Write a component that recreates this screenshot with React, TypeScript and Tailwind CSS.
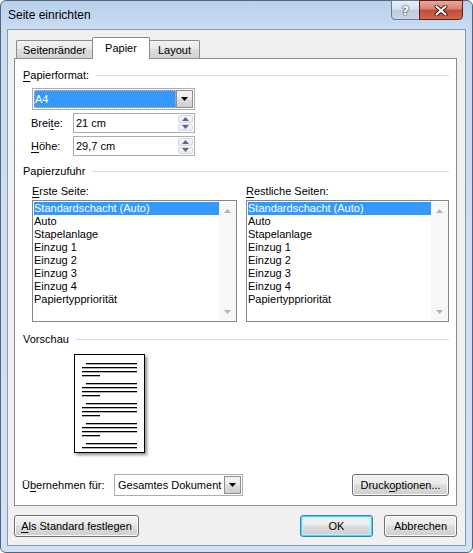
import React from "react";

const BTN =
  "flex h-[22px] items-center justify-center rounded-[3px] border border-[#707070] bg-[linear-gradient(#f2f2f2,#ebebeb_45%,#dddddd_50%,#cfcfcf)] shadow-[inset_0_0_0_1px_#fbfbfb]";

const paperSources = [
  "Standardschacht (Auto)",
  "Auto",
  "Stapelanlage",
  "Einzug 1",
  "Einzug 2",
  "Einzug 3",
  "Einzug 4",
  "Papiertyppriorität",
];

function Mn({ children }: { children: React.ReactNode }) {
  return <span className="underline underline-offset-[2px]">{children}</span>;
}

function SectionHeader({ children, className = "" }: { children: React.ReactNode; className?: string }) {
  return (
    <div className={`flex h-[13px] items-center ${className}`}>
      <span className="leading-[13px]">{children}</span>
      <div className="ml-[7px] h-px flex-1 bg-[#d5dfe5]" />
    </div>
  );
}

function DropButton() {
  return (
    <div className="flex w-[17px] items-center justify-center border border-[#8f8f8f] bg-[linear-gradient(#f2f2f2,#ebebeb_45%,#dddddd_50%,#cfcfcf)]">
      <svg width="7" height="4" viewBox="0 0 7 4">
        <path d="M0 0h7L3.5 4z" fill="#000" />
      </svg>
    </div>
  );
}

function Spinner() {
  return (
    <div className="flex w-[17px] flex-col gap-px p-px">
      {[0, 1].map((i) => (
        <div
          key={i}
          className="flex flex-1 items-center justify-center rounded-[2px] border border-[#d3d7de] bg-[linear-gradient(#f7f8fa,#e6eaf0)]"
        >
          <svg width="7" height="4" viewBox="0 0 7 4">
            <path d={i === 0 ? "M0 4h7L3.5 0z" : "M0 0h7L3.5 4z"} fill="#56698a" />
          </svg>
        </div>
      ))}
    </div>
  );
}

function SpinField({ value }: { value: string }) {
  return (
    <div className="flex h-[20px] w-[122px] border border-[#abadb3] bg-white">
      <span className="flex-1 pl-[2px] leading-[18px]">{value}</span>
      <Spinner />
    </div>
  );
}

function PaperList({ width }: { width: string }) {
  return (
    <div className={`flex h-[122px] border border-[#828790] bg-white py-px pl-px ${width}`}>
      <div className="flex-1">
        {paperSources.map((s, i) => (
          <div
            key={s}
            className={i === 0 ? "h-[13px] bg-[#3399ff] leading-[13px] text-white" : "h-[13px] leading-[13px]"}
          >
            {s}
          </div>
        ))}
      </div>
      <div className="flex w-[17px] flex-col justify-between bg-[#f7f7f7]">
        <div className="flex h-[17px] items-center justify-center">
          <svg width="7" height="4" viewBox="0 0 7 4">
            <path d="M0 4h7L3.5 0z" fill="#b4b4b4" />
          </svg>
        </div>
        <div className="flex h-[17px] items-center justify-center">
          <svg width="7" height="4" viewBox="0 0 7 4">
            <path d="M0 0h7L3.5 4z" fill="#b4b4b4" />
          </svg>
        </div>
      </div>
    </div>
  );
}

function PreviewPage() {
  const groups = [0, 1, 2, 3];
  return (
    <div className="ml-[51px] mt-[8px] h-[99px] w-[71px] border border-black bg-white shadow-[2px_2px_3px_rgba(0,0,0,0.45)]">
      <svg width="69" height="97" viewBox="0 0 69 97">
        {groups.map((g) => (
          <g key={g} fill="#000">
            <rect x="11" y={8 + g * 20} width="51" height="1.3" />
            <rect x="7" y={12 + g * 20} width="55" height="1.3" />
            <rect x="7" y={16 + g * 20} width="55" height="1.3" />
            <rect x="7" y={20 + g * 20} width="18" height="1.3" />
          </g>
        ))}
        <rect x="11" y="88" width="51" height="1.3" fill="#000" />
        <rect x="7" y="92" width="55" height="1.3" fill="#000" />
      </svg>
    </div>
  );
}

export default function App() {
  return (
    <div className="h-[553px] w-[473px] font-['Liberation_Sans',Arial,sans-serif] text-[11px] text-black">
      <div className="flex h-full flex-col rounded-[6px] border border-[#56657a] bg-[linear-gradient(180deg,#b9d1ec_0px,#c8dcf2_28px,#d0e2f6_100%)]">
        {/* title bar */}
        <div className="flex h-[28px] items-start">
          <span className="ml-[7px] mt-[7px] text-[12px] leading-[14px]">Seite einrichten</span>
          <div className="-mt-px ml-auto mr-[9px] flex">
            <div className="flex h-[20px] w-[29px] items-center justify-center rounded-bl-[4px] border border-[#6b7b8f] bg-[linear-gradient(#e9f0f8,#d2deec_50%,#bccbdc_50%,#c9d8e8)]">
              <span className="font-['DejaVu_Sans',sans-serif] text-[13px] font-bold leading-none text-white [text-shadow:0_0_1px_#1e2c3e,0_0_2px_#1e2c3e]">
                ?
              </span>
            </div>
            <div className="-ml-px flex h-[20px] w-[44px] items-center justify-center rounded-br-[4px] border border-[#5e2119] bg-[linear-gradient(#e9a99b,#d7826f_45%,#c44a34_50%,#d0674f)]">
              <svg width="14" height="11" viewBox="0 0 14 11">
                <path d="M2.5 1.5l9 8M11.5 1.5l-9 8" stroke="#3b1510" strokeWidth="4" strokeLinecap="round" />
                <path d="M2.5 1.5l9 8M11.5 1.5l-9 8" stroke="#fff" strokeWidth="2.2" strokeLinecap="round" />
              </svg>
            </div>
          </div>
        </div>

        {/* client area */}
        <div className="mx-[6px] flex h-[517px] flex-col border border-[#8d99a6] bg-[#f0f0f0]">
          {/* tabs */}
          <div className="ml-[8px] mt-[7px] flex h-[21px] items-end">
            <div className="flex h-[18px] w-[76px] items-center justify-center rounded-tl-[2px] border-l border-t border-[#898c95] bg-[linear-gradient(#f2f2f2,#e8e8e8_50%,#dcdcdc_50%,#d3d3d3)] pt-[2px] leading-[13px]">
              Seitenränder
            </div>
            <div className="relative z-10 -mb-px flex h-[22px] w-[58px] items-center justify-center rounded-t-[2px] border-x border-t border-[#898c95] bg-white leading-[13px]">
              Papier
            </div>
            <div className="flex h-[18px] w-[50px] items-center justify-center rounded-tr-[2px] border-r border-t border-[#898c95] bg-[linear-gradient(#f2f2f2,#e8e8e8_50%,#dcdcdc_50%,#d3d3d3)] pt-[2px] leading-[13px]">
              Layout
            </div>
          </div>

          {/* tab panel */}
          <div className="ml-[6px] mr-[8px] flex h-[448px] flex-col border border-[#898c95] bg-white pl-[8px] pr-[7px]">
            <SectionHeader className="mt-[10px]">
              <Mn>P</Mn>apierformat:
            </SectionHeader>

            <div className="ml-[9px] mt-[6px] flex h-[22px] w-[163px] border border-[#abadb3] bg-white p-px">
              <div className="flex-1 border border-dotted border-[#f6b46a] bg-[#3399ff] leading-[16px] text-white">A4</div>
              <DropButton />
            </div>

            <div className="ml-[8px] mt-[3px] flex items-center">
              <span className="w-[42px]">
                Brei<Mn>t</Mn>e:
              </span>
              <SpinField value="21 cm" />
            </div>
            <div className="ml-[8px] mt-[3px] flex items-center">
              <span className="w-[42px]">
                <Mn>H</Mn>öhe:
              </span>
              <SpinField value="29,7 cm" />
            </div>

            <SectionHeader className="mt-[9px]">Papierzufuhr</SectionHeader>

            <div className="mt-[7px] flex">
              <div className="ml-[9px] flex flex-col">
                <span className="h-[13px] leading-[13px]">
                  <Mn>E</Mn>rste Seite:
                </span>
                <div className="mt-[2px]">
                  <PaperList width="w-[205px]" />
                </div>
              </div>
              <div className="ml-[9px] flex flex-col">
                <span className="h-[13px] leading-[13px]">
                  <Mn>R</Mn>estliche Seiten:
                </span>
                <div className="mt-[2px]">
                  <PaperList width="w-[203px]" />
                </div>
              </div>
            </div>

            <SectionHeader className="mt-[11px]">Vorschau</SectionHeader>

            <PreviewPage />

            <div className="mb-[9px] mt-auto flex items-center">
              <span className="ml-[-1px] w-[92px]">
                Ü<Mn>b</Mn>ernehmen für:
              </span>
              <div className="flex h-[22px] w-[129px] border border-[#abadb3] bg-white p-px">
                <span className="flex-1 pl-[2px] leading-[18px]">Gesamtes Dokument</span>
                <DropButton />
              </div>
              <div className={`${BTN} ml-auto w-[97px]`}>
                Druck<Mn>o</Mn>ptionen...
              </div>
            </div>
          </div>

          {/* dialog buttons */}
          <div className="ml-[6px] mr-[8px] mt-[9px] flex">
            <div className={`${BTN} w-[125px]`}>
              <Mn>A</Mn>ls Standard festlegen
            </div>
            <div className="ml-auto flex h-[22px] w-[73px] items-center justify-center rounded-[3px] border border-[#3c7fb1] bg-[linear-gradient(#f2f2f2,#ebebeb_45%,#dddddd_50%,#cfcfcf)] shadow-[inset_0_0_0_1px_#48d8fb,inset_0_0_0_2px_#c4ecfb]">
              OK
            </div>
            <div className={`${BTN} ml-[11px] w-[73px]`}>Abbrechen</div>
          </div>
        </div>
      </div>
    </div>
  );
}
